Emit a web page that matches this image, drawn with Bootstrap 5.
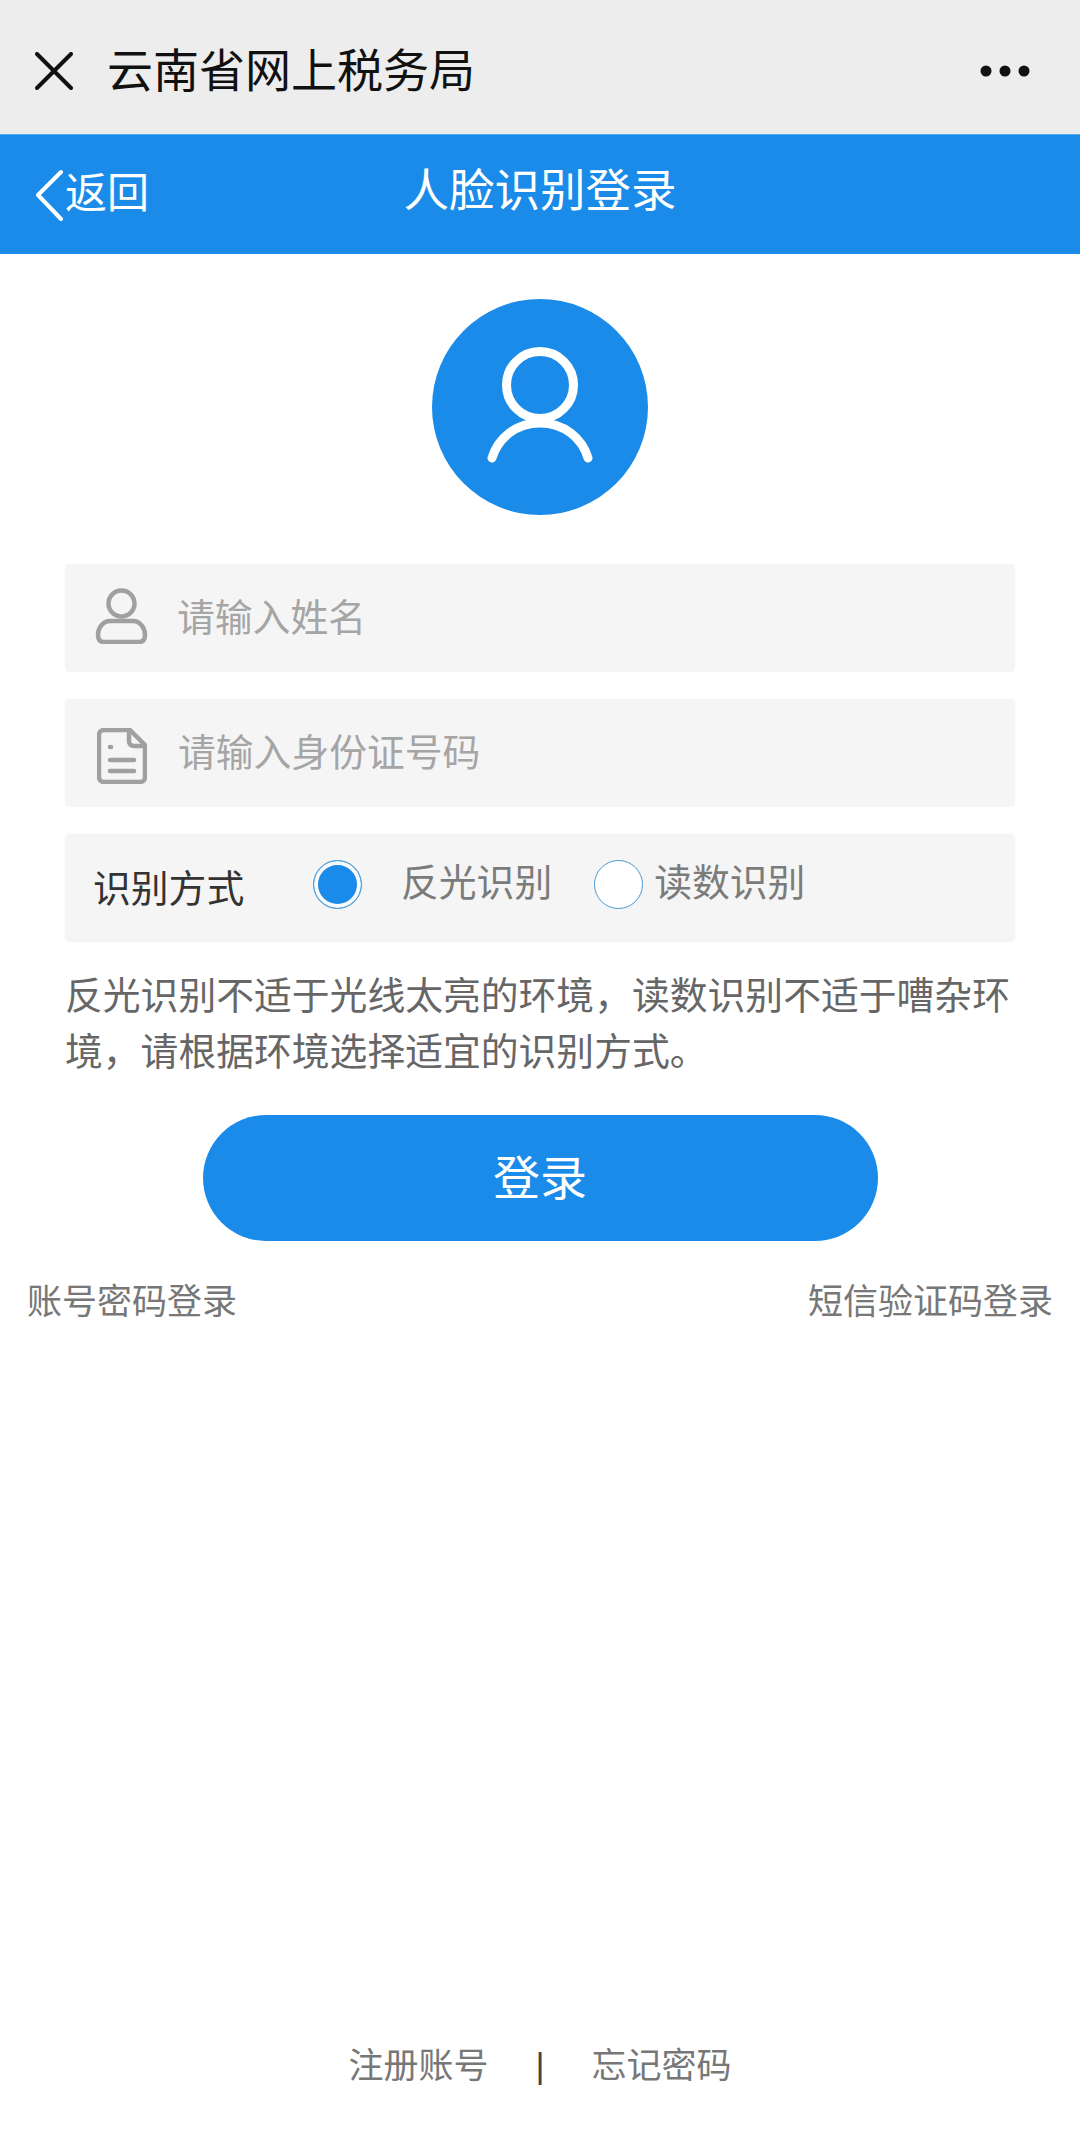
<!DOCTYPE html>
<html lang="zh-CN">
<head>
<meta charset="utf-8">
<title>人脸识别登录</title>
<link href="https://cdn.jsdelivr.net/npm/bootstrap@5.3.0/dist/css/bootstrap.min.css" rel="stylesheet">
<style>
html,body{height:100%;}
body{font-family:"Liberation Sans","Noto Sans CJK SC",sans-serif;background:#fff;color:#333;}
.page-wrap{height:2140px;}
.wx-bar{height:134px;background:#ededed;padding:7px 50px 0 35px;}
.wx-title{font-size:46px;line-height:1;color:#111;margin-left:34px;}
.blue-bar{height:120px;background:#1a8be8;color:#fff;border-top:1px solid #4db0ee;padding-left:34px;}
.back-txt{font-size:42px;line-height:1;margin-left:1px;margin-top:-2px;}
.bar-title{font-size:45.5px;line-height:1;left:0;right:0;top:34px;text-align:center;}
.avatar-disc{width:216px;height:216px;background:#1a8be8;margin:45px auto 0;}
.form-area{padding:0 65px;margin-top:49px;}
.field-box{height:108px;background:#f5f5f5;border-radius:5px;margin-bottom:27px;padding-left:30px;font-size:37.8px;color:#a5a5a5;box-shadow:0 0 1px #eee;}
.field-box svg{flex:none;}
.icon-up{margin-top:-4px;margin-right:-1px;}
.icon-down{margin-top:5px;margin-left:2px;margin-right:1px;}
.field-txt{margin-left:30px;line-height:1;padding-top:2px;}
.method-lbl{color:#333;font-size:37.8px;line-height:1;width:220px;flex:none;padding-top:3px;margin-left:-2px;}
.radio-dot{width:49px;height:49px;border-radius:50%;border:1px solid #4a9ad0;background:#fff;flex:none;margin-top:-8px;}
.radio-dot.is-on{background:#1a8be8;box-shadow:inset 0 0 0 4px #f9f9f9;}
.radio-txt{color:#7b7b7b;line-height:1;margin-top:-8px;}
.gap-a{margin-left:39px;margin-right:42px;}
.gap-b{margin-left:11px;}
.hint-txt{font-size:37.8px;line-height:56px;color:#666;margin:-1px 0 0;}
.login-btn{display:block;width:675px;height:126px;margin:35px auto 0;background:#1a8be8;border:0;border-radius:63px;color:#fff;font-size:47px;line-height:1;}
.link-row{padding:0 27px;margin-top:39px;font-size:35px;line-height:44px;color:#777;}
.foot-row{font-size:35px;line-height:44px;color:#777;margin-top:auto;padding-bottom:52px;}
.foot-sep{width:103px;text-align:center;color:#444;font-size:35px;}
</style>
</head>
<body>
<div class="page-wrap d-flex flex-column">
  <div class="wx-bar d-flex align-items-center">
    <svg width="38" height="38" viewBox="0 0 38 38" fill="none" stroke="#111" stroke-width="4" stroke-linecap="round"><path d="M2 2 36 36M36 2 2 36"/></svg>
    <div class="wx-title">云南省网上税务局</div>
    <svg class="ms-auto" width="50" height="12" viewBox="0 0 50 12" fill="#111"><circle cx="6" cy="6" r="5.5"/><circle cx="25" cy="6" r="5.5"/><circle cx="44" cy="6" r="5.5"/></svg>
  </div>
  <div class="blue-bar position-relative d-flex align-items-center">
    <svg width="30" height="52" viewBox="0 0 30 52" fill="none" stroke="#fff" stroke-width="4" stroke-linecap="round" stroke-linejoin="round"><path d="M27 3 4 26l23 24"/></svg>
    <span class="back-txt">返回</span>
    <div class="bar-title position-absolute">人脸识别登录</div>
  </div>
  <div class="avatar-disc rounded-circle d-flex align-items-center justify-content-center">
    <svg width="112" height="122" viewBox="0 0 112 122" fill="none" stroke="#fff" stroke-width="9" stroke-linecap="round"><circle cx="56" cy="39" r="33.500"/><path d="M8 112C14 92 32 77 56 77s42 15 48 35"/></svg>
  </div>
  <div class="form-area">
    <div class="field-box d-flex align-items-center">
      <svg class="icon-up" width="53" height="56" viewBox="0 0 53 56" fill="none" stroke="#a0a0a0" stroke-width="4.5"><circle cx="26.500" cy="15.500" r="13"/><path d="M15 33h23c8 0 12 8 12 14 0 5-2 7-6 7H9c-4 0-6-2-6-7 0-6 4-14 12-14z"/></svg>
      <span class="field-txt">请输入姓名</span>
    </div>
    <div class="field-box d-flex align-items-center">
      <svg class="icon-down" width="50" height="56" viewBox="0 0 50 56" fill="none" stroke="#a0a0a0" stroke-width="4.5" stroke-linejoin="round" stroke-linecap="round"><path d="M7 2h26l15 15v32c0 3-2 5-5 5H7c-3 0-5-2-5-5V7c0-3 2-5 5-5z"/><path d="M32 3v10c0 3 2 5 5 5h10M13 32h24M13 43h24"/><path d="M13 19h1"/></svg>
      <span class="field-txt">请输入身份证号码</span>
    </div>
    <div class="field-box d-flex align-items-center">
      <span class="method-lbl">识别方式</span>
      <span class="radio-dot is-on"></span>
      <span class="radio-txt gap-a">反光识别</span>
      <span class="radio-dot"></span>
      <span class="radio-txt gap-b">读数识别</span>
    </div>
    <p class="hint-txt">反光识别不适于光线太亮的环境，读数识别不适于嘈杂环境，请根据环境选择适宜的识别方式。</p>
  </div>
  <button type="button" class="login-btn">登录</button>
  <div class="link-row d-flex justify-content-between">
    <span>账号密码登录</span>
    <span>短信验证码登录</span>
  </div>
  <div class="foot-row d-flex justify-content-center">
    <span>注册账号</span>
    <span class="foot-sep">|</span>
    <span>忘记密码</span>
  </div>
</div>
<script src="https://cdn.jsdelivr.net/npm/bootstrap@5.3.0/dist/js/bootstrap.bundle.min.js"></script>
</body>
</html>
